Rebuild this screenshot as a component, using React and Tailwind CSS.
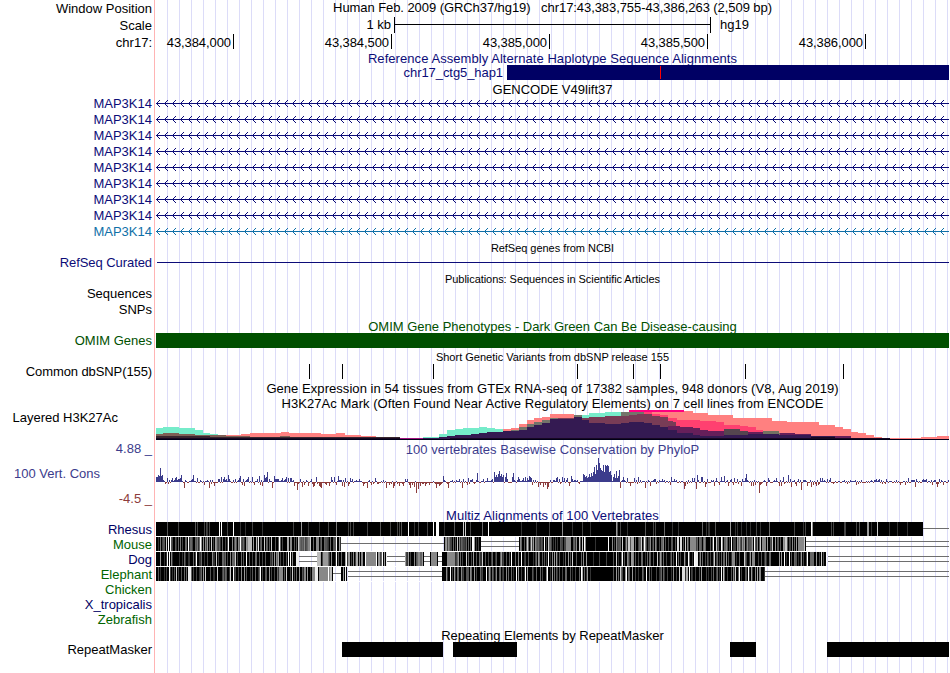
import React from "react";

const TRACK_X = 156;
const TRACK_W = 793;

// ---------- layout pieces ----------
function Row({ h, label, labelClass = "", children, className = "" }) {
  return (
    <div className="flex shrink-0" style={{ height: h }}>
      <div className="flex w-[155px] shrink-0 items-center justify-end border-r border-[#ffb4b4] pr-[2px]">
        <span className={`whitespace-pre ${labelClass}`}>{label}</span>
      </div>
      <div className={`ml-px flex w-[793px] shrink-0 ${className}`}>{children}</div>
    </div>
  );
}

function Title({ h, children, label, labelClass, className = "" }) {
  return (
    <Row h={h} label={label} labelClass={labelClass} className="items-center justify-center">
      <span className={`whitespace-pre ${className}`}>{children}</span>
    </Row>
  );
}

function Plot({ h, top = 0, children }) {
  return (
    <svg
      className="relative block shrink-0 overflow-visible"
      width={TRACK_W}
      height={h}
      viewBox={`${TRACK_X} ${top} ${TRACK_W} ${h}`}
      shapeRendering="crispEdges"
    >
      {children}
    </svg>
  );
}

// ---------- gene models ----------
function GeneLine({ color }) {
  let d = "";
  for (let x = 156; x < 947; x += 8) {
    for (let k = 1; k <= 3; k++) {
      d += `M${x + k} ${7 - k}h1v1h-1zM${x + k} ${7 + k}h1v1h-1z`;
    }
  }
  return (
    <Plot h={16}>
      <rect x={156} y={7} width={793} height={1} fill={color} />
      <path d={d} fill={color} />
    </Plot>
  );
}

// ---------- H3K27Ac layers; positions are thirds of a pixel from each origin ----------
const LAYERS = [
  ["#76ecca", [[150, "18:84 38:81 88:84 134:91 158:99 180:103 204:106 230:119"], [410, "40:112 87:101 111:90 135:87 158:84 207:82 231:84 255:87 282:119 491:45 537:38 585:36 660:119"]]],
  ["#ff8080", [[150, "228:106 273:103 300:99 394:96 418:99 513:102 558:100 585:104 633:107 678:119"], [410, "278:87 302:83 326:71 350:60 373:54 397:51 420:42 491:119 680:36 810:36"], [680, "0:36 12:34 38:38 60:39 84:46 108:44 131:46 158:54 275:63 320:66 417:75 464:81 488:87 513:95 534:98 558:104 582:110 606:113 723:111 770:108 807:119"]]],
  ["#ff4070", [[410, "703:37 727:41 750:45 775:53 800:60"], [680, "0:60 60:63 84:62 108:66 131:74 180:77 204:81 228:90 250:93 298:100 345:104 393:107 464:110 513:113 558:116 606:119"]]],
  ["#70baf0", [[150, "678:111 750:119"]]],
  ["#a0107c", [[150, "740:114 810:114"], [410, "0:114 60:119"]]],
  ["#7e5f55", [[150, "18:102 38:99 88:102 134:105 228:108 300:110 390:108 420:110 540:119"]]],
  ["#74746a", [[410, "302:91 326:82 350:72 373:66 397:60 419:55 443:119 491:45 515:119 633:37 703:119"]]],
  ["#783c56", [[410, "443:54 537:50 585:48 633:47 657:45 680:42 703:42 727:47 750:52 775:62 790:67 798:81"], [680, "0:81 10:119"]]],
  ["#661f5a", [[410, "775:78 810:81"], [680, "0:81 38:84 60:89 84:92 131:93 204:95 250:98 298:100 345:102 393:107 440:109 513:113 560:119"]]],
  ["#55454f", [[680, "131:87 180:92 204:119"]]],
  ["#727262", [[680, "250:94 298:99 300:119"]]],
  ["#341a52", [[410, "40:113 87:110 111:107 135:105 182:103 207:100 231:97 255:95 278:93 326:89 350:81 373:76 397:68 419:58 443:56 491:52 515:60 537:68 560:70 585:72 633:68 657:66 680:65 703:70 727:76 750:80 775:90 800:98"], [680, "0:98 38:104 60:107 131:104 204:102 298:104 393:109 464:113 513:119"]]],
  ["#38262e", [[150, "18:108 134:109 180:111 300:112 420:111 520:112 630:110 700:112 750:119"]]],
  ["#180822", [[150, "18:113 204:114 750:116"], [410, "0:116 120:115 400:114"], [680, "0:114 393:112 464:115 630:117 807:119"]]],
  ["#000018", [[150, "18:117"], [410, "0:117"], [680, "0:117 807:119"]]],
];

function stepPath(parts) {
  const pts = parts.flatMap(([origin, text]) =>
    text.split(" ").map((p) => {
      const [x, y] = p.split(":").map(Number);
      return [Math.round(origin + x / 3), Math.min(30, Math.max(0, Math.round(y / 3) - 10))];
    })
  );
  let d = `M${pts[0][0]} 30`;
  pts.forEach(([x, y]) => {
    d += `H${x}V${y}`;
  });
  return d + "H949V30Z";
}

// ---------- PhyloP bars ----------
const CONS = [
  [150, "18:5 22:5 24:7 27:6 31:14 34:6 37:7 40:2 52:4 58:2 67:4 73:2 77:4 80:5 85:3 88:3 91:4 94:7 103:-6 106:2 124:2 127:3 130:7 142:4 151:2 163:-3 178:-6 193:-4 205:3 208:3 214:5 220:3 223:5 229:3 235:7 238:3 256:3 268:4 271:6 277:-3 280:3 283:-4 292:3 296:5 307:5 313:-3 322:3 328:6 331:-3 337:-4 343:7 346:4 349:5 352:10 358:3 367:-6 373:6 376:3 379:3 382:3 385:3 394:2 397:4 406:3 409:5 415:4 421:4 424:4 430:2 433:-4 442:-8 451:3 457:-5 463:-3 469:2 475:-4 484:3 490:-5 493:-4 499:5 508:-4 511:-5 514:-6 529:-3 538:-4 544:5 553:5 559:-3 565:6 574:2 577:-4 583:-5 586:4 595:-4 601:4 607:3 619:2 628:3 640:-4 652:-6 664:-3 676:4 709:-6 718:-3 730:-6 733:-4 748:-4 760:-4 766:3 772:3 778:-3 781:-6 787:-3 799:-11 805:-8"],
  [410, "13:-5 19:-11 25:-7 31:-4 46:-4 58:-3 79:-6 88:-4 91:-3 100:6 115:-6 139:2 148:3 157:-6 160:3 173:-3 175:4 187:3 202:9 220:3 232:4 247:3 253:10 256:5 259:7 262:5 265:8 268:11 271:6 274:8 277:5 280:7 286:5 289:9 292:3 307:5 310:9 325:5 328:3 340:4 346:5 352:4 358:6 361:5 364:4 367:-3 376:2 385:-5 391:-3 400:-5 406:-3 412:-7 415:-5 421:2 439:4 442:5 448:3 457:5 463:4 472:4 479:-4 484:6 487:3 502:2 520:8 523:7 526:5 529:6 532:4 535:5 538:8 541:5 544:9 547:6 550:10 553:15 556:8 559:17 562:12 565:24 568:19 571:14 574:12 577:11 580:17 583:10 586:17 589:16 592:17 595:16 598:10 601:11 604:7 610:5 613:8 616:4 619:11 622:4 625:6 628:12 631:-6 640:5 643:2 652:4 661:-4 673:4 679:2 685:5 691:2 706:-6 715:2 721:-4 733:3 736:3 757:3 781:-3 784:5 793:3"],
  [680, "13:-7 16:-4 37:4 43:4 49:-7 52:7 64:5 67:5 76:-5 82:3 94:2 103:-4 109:4 118:-3 124:5 133:6 145:-4 154:3 160:-3 163:4 172:3 184:-4 187:3 196:4 199:8 214:-4 220:-4 226:-3 238:-11 241:-3 253:2 259:-4 265:4 289:4 298:-4 304:-4 310:5 325:7 331:3 334:-5 349:-4 355:3 364:-8 370:2 382:-4 394:-5 400:-3 409:-4 415:-3 421:4 427:4 442:3 451:4 529:-3 589:3 598:3 619:3 661:-3 676:-3 685:4 706:-5 709:3 730:3 739:3 757:-3 772:-5 778:3 790:-3"],
];

function consBars() {
  const bars = new Map();
  for (let x = 156; x < 949; x++) {
    const n = (x * 7919 + ((x * x) % 131) * 17) % 11;
    const reddish = (x > 293 && x < 329) || (x > 383 && x < 436) || (x > 535 && x < 550);
    bars.set(x, reddish ? (n < 7 ? -1 : n < 9 ? -2 : 1) : n < 4 ? -1 : n < 8 ? 1 : n < 10 ? 2 : -2);
  }
  CONS.forEach(([o, text]) =>
    text.split(" ").forEach((p) => {
      const [x, v] = p.split(":").map(Number);
      bars.set(o + Math.floor(x / 3), v);
    })
  );
  return [...bars];
}

// ---------- multiz conservation stripes: position:shade*width ----------
const SPECIES = [
  {
    name: "Rhesus", color: "text-[#000064]", grain: 0, blocks: [[156, 923]], single: [[923, 949]], double: [],
    marks: [
      [150, "52:5 85:4 137:5 141:4 162:4 168:4 172:3 178:4 208:f 214:f 232:4 249:f 270:3 285:3 308:4 337:3 430:4 454:9 476:3 508:3 535:4 558:7 594:6"],
      [340, "25:4 32:4 41:4 82:4 122:5 150:4 172:4 178:4 184:5 205:f 222:3 234:4 263:4 280:f 289:f*3 313:3 343:5 371:c 375:c 391:4 427:6 446:f 545:3 590:3"],
      [530, "58:4 97:8 127:3 156:4 181:3 258:9 263:5 271:4 292:3 345:5 370:4 376:4 402:6 428:3 445:3 516:6 530:3 536:3*2 555:5"],
      [720, "31:9 47:3 52:3 64:3 80:3 92:3 109:4 121:3 148:6 223:4 250:3 256:4 275:f 278:9 333:4 340:4 373:4*2 410:4 417:5 442:9 446:9 455:3 471:c 508:3 532:3 562:3"],
    ],
  },
  {
    name: "Mouse", color: "text-[#006400]", grain: 5, blocks: [[156, 341], [444, 481], [519, 806]], single: [[341, 444]], double: [[481, 519], [806, 949]],
    marks: [
      [150, "25:3 32:7 37:4 41:5*2 50:c 56:f 62:f 75:5 86:6 92:7 98:4 108:6 114:f 122:6 128:4 137:6 142:7 147:6 150:f 155:9 160:8 165:8 172:9 178:6 184:c 190:4 196:9 205:4 217:6 225:4 234:f 246:8 258:5 270:f 280:6 290:9 295:b*4 310:9 318:b 324:e 333:6 342:c 350:6 357:5 365:c 376:5 388:f 412:a*2 422:8*2 432:5 440:5 446:c 455:5 462:8 468:5 480:c 489:6 505:8 515:6 525:5*2 540:6 550:5 560:f 567:9"],
      [340, "318:9 323:4 330:4*2 340:6 346:5 352:c 357:8 365:6 372:4 378:6 385:6 391:6 397:f*2 404:9 410:3 415:4 545:6 553:5 562:c 570:5 577:4 585:8 592:f 597:5"],
      [530, "4:c 9:9 22:5 27:4 36:4 42:f 48:4 54:c 58:6*2 75:4 82:3 92:5 108:8*4 122:8 130:5 137:3 148:c 156:c 162:f 167:8 196:3 236:f 252:4 258:8 265:5 271:6 277:c 285:4 290:9 295:c*2 305:a*3 316:6 325:4 335:c 343:f 350:4 360:8 370:6 380:5 388:4 395:6*2 405:5 415:4 425:5*2 435:5 441:d*2 450:d*2 460:5 466:c 472:8 481:8*6 500:4 507:6*2 515:5 522:8 527:6 540:5 550:f 558:c 565:6"],
      [720, "3:f 8:9 14:6*2 22:5 28:4 34:f 40:4*3 52:9 58:9 62:5 68:9 73:9 80:4 86:4 92:5 98:9 103:f 112:8 122:c 127:8*4 142:9 150:5 158:c 165:9 175:5 182:5 190:9 197:c*2 210:4 217:8 223:6 228:9 235:8*6 253:c"],
    ],
  },
  {
    name: "Dog", color: "text-[#000064]", grain: 2, blocks: [[156, 299], [317, 387], [405, 424], [430, 438], [442, 827]], single: [], double: [[299, 317], [387, 405], [424, 430], [438, 442], [828, 949]],
    marks: [
      [150, "32:9 52:f 58:f 64:8 88:3 97:3 105:3 114:3 136:4 140:f 150:3 162:3 172:4 187:8 198:c 205:4 216:6 222:4 232:4 240:8 246:6*3 256:c 262:4 280:5 290:f 297:5 308:4 317:6*2 328:5 337:4 345:5 360:4 367:6 372:9 378:8 384:a 390:4 400:4 410:5 415:f 422:f 428:8 438:e*3 501:b*3 510:a 516:4 520:9*5 535:6 545:8 560:f 565:5"],
      [340, "4:6 15:a 20:f 25:9*2 35:4 40:8 46:4 50:a*2 58:8 65:8*2 75:f 80:8*10 110:f 114:9*2 122:4 127:f 132:9 138:e 196:9 200:4 205:9 210:4 222:8 228:5 235:8*2 243:6 248:9 275:8*6 323:8 326:8*7 350:4 355:9 362:6 368:4 378:c 385:6 395:4 400:9 408:5 418:6 428:c 435:5 445:4 455:4 470:5 480:6 485:9 490:4 500:5 508:5 515:f 525:6 535:8 545:f 555:4 565:5"],
      [530, "15:4 25:9 29:6 38:5 44:5 48:4 54:f 60:3 66:8 72:9 78:9 88:5 100:3 115:9 120:5 128:c 140:5 155:6 160:8 168:9 190:3 208:4 228:4 250:5 258:c 265:3 277:f 283:5 292:8 297:3 303:9*2 310:8 316:5 325:4 335:6 345:3 353:6 360:5 370:5 382:c 392:9 400:6 410:4 420:3 430:5 440:f 445:6 452:4 462:9 475:f 492:f 497:e*3 510:8 517:6 525:4 532:5 540:4 552:c 560:4"],
      [720, "3:6 10:6 18:9 24:5 36:8*3 50:3 58:6 72:c 78:4 90:9 97:8*3 115:4 125:5 140:3 178:9 185:9 193:f 199:3 208:f 215:5 225:5*2 235:3 243:9 250:4 258:5 263:f 270:6 275:6*2 288:9 297:4 305:c 311:5 318:f"],
    ],
  },
  {
    name: "Elephant", color: "text-[#006400]", grain: 2, blocks: [[156, 333], [341, 347], [442, 765]], single: [[333, 341]], double: [[348, 442], [765, 949]],
    marks: [
      [150, "25:5 32:3 50:4 57:f 62:4 72:5 80:c 86:4 95:5 108:6 114:e*3 124:6 130:4 140:4 150:4 160:9 165:c 180:5 190:3 201:c 218:4 228:5 237:3 242:c 250:f 257:4 265:4 275:8 282:9 290:5 300:3 307:5 317:6 325:3 331:f 337:4 345:5 350:5 359:9 365:4 373:4 387:8*4 402:5 410:c 420:4 428:c 433:4 440:6 447:9 457:5 463:8*2 473:9 480:3 486:8*4 497:e*3 507:8*9 535:f 538:8 542:b*2"],
      [340, "10:9 15:e 318:8 330:f 338:4 343:9 355:6 365:8 370:4 378:5*3 390:8 395:6 402:9 408:4 420:6 428:4 440:f 447:9 452:5 460:4 470:8 478:5 490:4 498:8 505:6 513:6 520:3 528:f 535:9 545:4 557:f 563:9"],
      [530, "8:5 20:6 30:6 36:4 48:8 53:f 60:3 66:9 72:6 78:5 88:5 97:4 110:6 120:5 127:3 135:4 148:6 153:f 158:a 164:6 172:9 180:3 250:5 258:9 270:c 278:4 285:9 290:f 298:5 308:9 315:4 325:3 340:4 348:f 365:4 380:4 392:4 402:3 412:4 425:3 430:8 440:4 448:c 457:d*3 468:a*2 478:f 485:4 497:4 507:5 515:9 530:4 545:4 560:4"],
      [720, "3:f 10:c 22:4 33:5 40:8 47:c 55:6 58:f 65:4 75:5*2 85:f 95:9 105:8 113:a 118:8*2"],
    ],
  },
  { name: "Chicken", color: "text-[#006400]" },
  { name: "X_tropicalis", color: "text-[#000064]" },
  { name: "Zebrafish", color: "text-[#006400]" },
];

// Low-identity columns scattered between the strong marks.
function grainColumns(blocks, grain) {
  const out = [];
  blocks.forEach(([a, b]) => {
    for (let x = a + 1; x < b; x++) {
      if (x > 586 && x < 612) continue;
      const n = ((x * 37) ^ (x * x * (grain + 3))) % 13;
      if (n < grain) out.push([x, ["#333", "#666", "#444", "#888", "#555"][n]]);
    }
  });
  return out;
}

function Alignment({ blocks, single, double: dbl, marks, grain }) {
  return (
    <Plot h={15}>
      <rect x={156} y={14} width={blocks[blocks.length - 1][1] - 156} height={1} fill="#fff" />
      {blocks.map(([a, b]) => (
        <rect key={a} x={a} y={0} width={b - a} height={14} fill="#000" />
      ))}
      {grainColumns(blocks, grain).map(([x, fill]) => (
        <rect key={x} x={x} y={0} width={1} height={14} fill={fill} />
      ))}
      {marks.flatMap(([o, text]) =>
        text.split(" ").map((m) => {
          const [pos, rest] = m.split(":");
          const [shade, w = "1"] = rest.split("*");
          return (
            <rect key={o + m} x={o + Math.floor(Number(pos) / 3)} y={0} width={Number(w)} height={14} fill={`#${shade.repeat(3)}`} />
          );
        })
      )}
      {single.map(([a, b]) => (
        <rect key={a} x={a} y={6} width={b - a} height={1} fill="#6e6e6e" />
      ))}
      {dbl.map(([a, b]) => (
        <g key={a} fill="#6e6e6e">
          <rect x={a} y={4} width={b - a} height={1} />
          <rect x={a} y={9} width={b - a} height={1} />
        </g>
      ))}
    </Plot>
  );
}

const SNPS = [309, 342, 433, 577, 633, 660, 745, 843];
const REPEATS = [[342, 443], [453, 517], [730, 756], [827, 949]];
const NAVY = "text-[#0c0c78]";

export default function App() {
  return (
    <div className="h-[673px] w-[950px] overflow-hidden bg-white font-['Liberation_Sans',Arial,sans-serif] text-[13px] leading-[15px] text-black">
      <div className="flex h-[673px] w-[949px] flex-col bg-[linear-gradient(to_right,#fff_156px,transparent_156px),repeating-linear-gradient(to_right,transparent_0,transparent_11px,#dcdcf8_11px,#dcdcf8_12px)]">
        <Title h={17} label="Window Position" className="mb-[2px] tracking-[-0.07px]">{"Human Feb. 2009 (GRCh37/hg19)   chr17:43,383,755-43,386,263 (2,509 bp)"}</Title>

        <Row h={17} label="Scale">
          <div className="w-[238px] pr-[3px] text-right">1 kb</div>
          <div className="flex h-[16px] w-[317px] border-x border-black">
            <div className="mt-[7px] h-px flex-1 bg-black" />
          </div>
          <div className="ml-[9px]">hg19</div>
        </Row>

        <Row h={17} label="chr17:">
          {["43,384,000", "43,384,500", "43,385,000", "43,385,500", "43,386,000"].map((t, i) => (
            <div key={t} className={`h-[15px] border-r border-black pr-[2px] pt-px text-right tracking-[-0.08px] ${i === 0 ? "w-[78px]" : "w-[158px]"}`}>
              {t}
            </div>
          ))}
        </Row>

        <Title h={14} className={`tracking-[0.06px] ${NAVY}`}>Reference Assembly Alternate Haplotype Sequence Alignments</Title>
        <Row h={15}>
          <div className={`w-[351px] pr-[4px] text-right tracking-[-0.07px] ${NAVY}`}>chr17_ctg5_hap1</div>
          <div className="flex h-[15px] w-[442px] items-center bg-[#000064]">
            <div className="ml-[153px] h-[13px] w-px bg-[#ff0000]" />
          </div>
        </Row>

        <Title h={16} className="mt-[2px]">GENCODE V49lift37</Title>
        {Array.from({ length: 9 }, (_, i) => (
          <Row key={i} h={16} label="MAP3K14" labelClass={`mb-[2px] ${i === 8 ? "text-[#1070a8]" : NAVY}`}>
            <GeneLine color={i === 8 ? "#1070a8" : "#0c0c78"} />
          </Row>
        ))}

        <Title h={15} className="mt-[2px] text-[11px] tracking-[-0.04px]">RefSeq genes from NCBI</Title>
        <Row h={16} label="RefSeq Curated" labelClass={`mb-[2px] tracking-[-0.07px] ${NAVY}`}>
          <div className="ml-px mt-[7px] h-px flex-1 bg-[#0c0c78]" />
        </Row>

        <Title h={15} className="mt-[2px] text-[11px] tracking-[-0.06px]">Publications: Sequences in Scientific Articles</Title>
        <Row h={16} label="Sequences" labelClass="mb-[2px]" />
        <Row h={16} label="SNPs" labelClass="mb-[2px]" />

        <Title h={15} className="mt-[2px] text-[#005000]">OMIM Gene Phenotypes - Dark Green Can Be Disease-causing</Title>
        <Row h={15} label="OMIM Genes" labelClass="text-[#005000]">
          <div className="h-[15px] flex-1 bg-[#005000]" />
        </Row>

        <Title h={16} className="mt-[2px] text-[11px]">Short Genetic Variants from dbSNP release 155</Title>
        <Row h={15} label="Common dbSNP(155)" labelClass="tracking-[-0.1px]">
          <Plot h={15}>
            {SNPS.map((x) => (
              <rect key={x} x={x} y={0} width={1} height={15} fill="#000" />
            ))}
          </Plot>
        </Row>

        <Title h={17} className="mt-px tracking-[0.055px]">Gene Expression in 54 tissues from GTEx RNA-seq of 17382 samples, 948 donors (V8, Aug 2019)</Title>
        <Title h={14} className="tracking-[0.05px]">H3K27Ac Mark (Often Found Near Active Regulatory Elements) on 7 cell lines from ENCODE</Title>
        <Row h={30} label="Layered H3K27Ac" labelClass="mr-[34px] mb-[16px]">
          <Plot h={30}>
            {LAYERS.map(([color, parts]) => (
              <path key={color} d={stepPath(parts)} fill={color} />
            ))}
            <rect x={629} y={0} width={55} height={2} fill="#ff0080" />
          </Plot>
        </Row>

        <Title h={18} label="4.88 _" labelClass="mb-px text-[#3c3c8c]" className="tracking-[0.03px] text-[#3c3c8c]">
          100 vertebrates Basewise Conservation by PhyloP
        </Title>
        <Row h={33} label="100 Vert. Cons" labelClass="mr-[52px] mb-[3px] text-[#3c3c8c]">
          <Plot h={33} top={458}>
            {consBars().map(([x, v]) => (
              <rect key={x} x={x} y={v > 0 ? 482 - v : 482} width={1} height={Math.abs(v)} fill={v > 0 ? "#3c3c8c" : "#8c3c3c"} />
            ))}
          </Plot>
        </Row>
        <Row h={17} label="-4.5 _" labelClass="mb-[2px] text-[#8c3c3c]" />

        <Title h={14} className={`tracking-[0.05px] ${NAVY}`}>Multiz Alignments of 100 Vertebrates</Title>
        {SPECIES.map((s) => (
          <Row key={s.name} h={15} label={s.name} labelClass={s.color}>
            {s.blocks && <Alignment {...s} />}
          </Row>
        ))}

        <Title h={15} className="mt-[2px]">Repeating Elements by RepeatMasker</Title>
        <Row h={15} label="RepeatMasker">
          <Plot h={15}>
            {REPEATS.map(([a, b]) => (
              <rect key={a} x={a} y={0} width={b - a} height={15} fill="#000" />
            ))}
          </Plot>
        </Row>
        <Row h={16} />
      </div>
    </div>
  );
}
